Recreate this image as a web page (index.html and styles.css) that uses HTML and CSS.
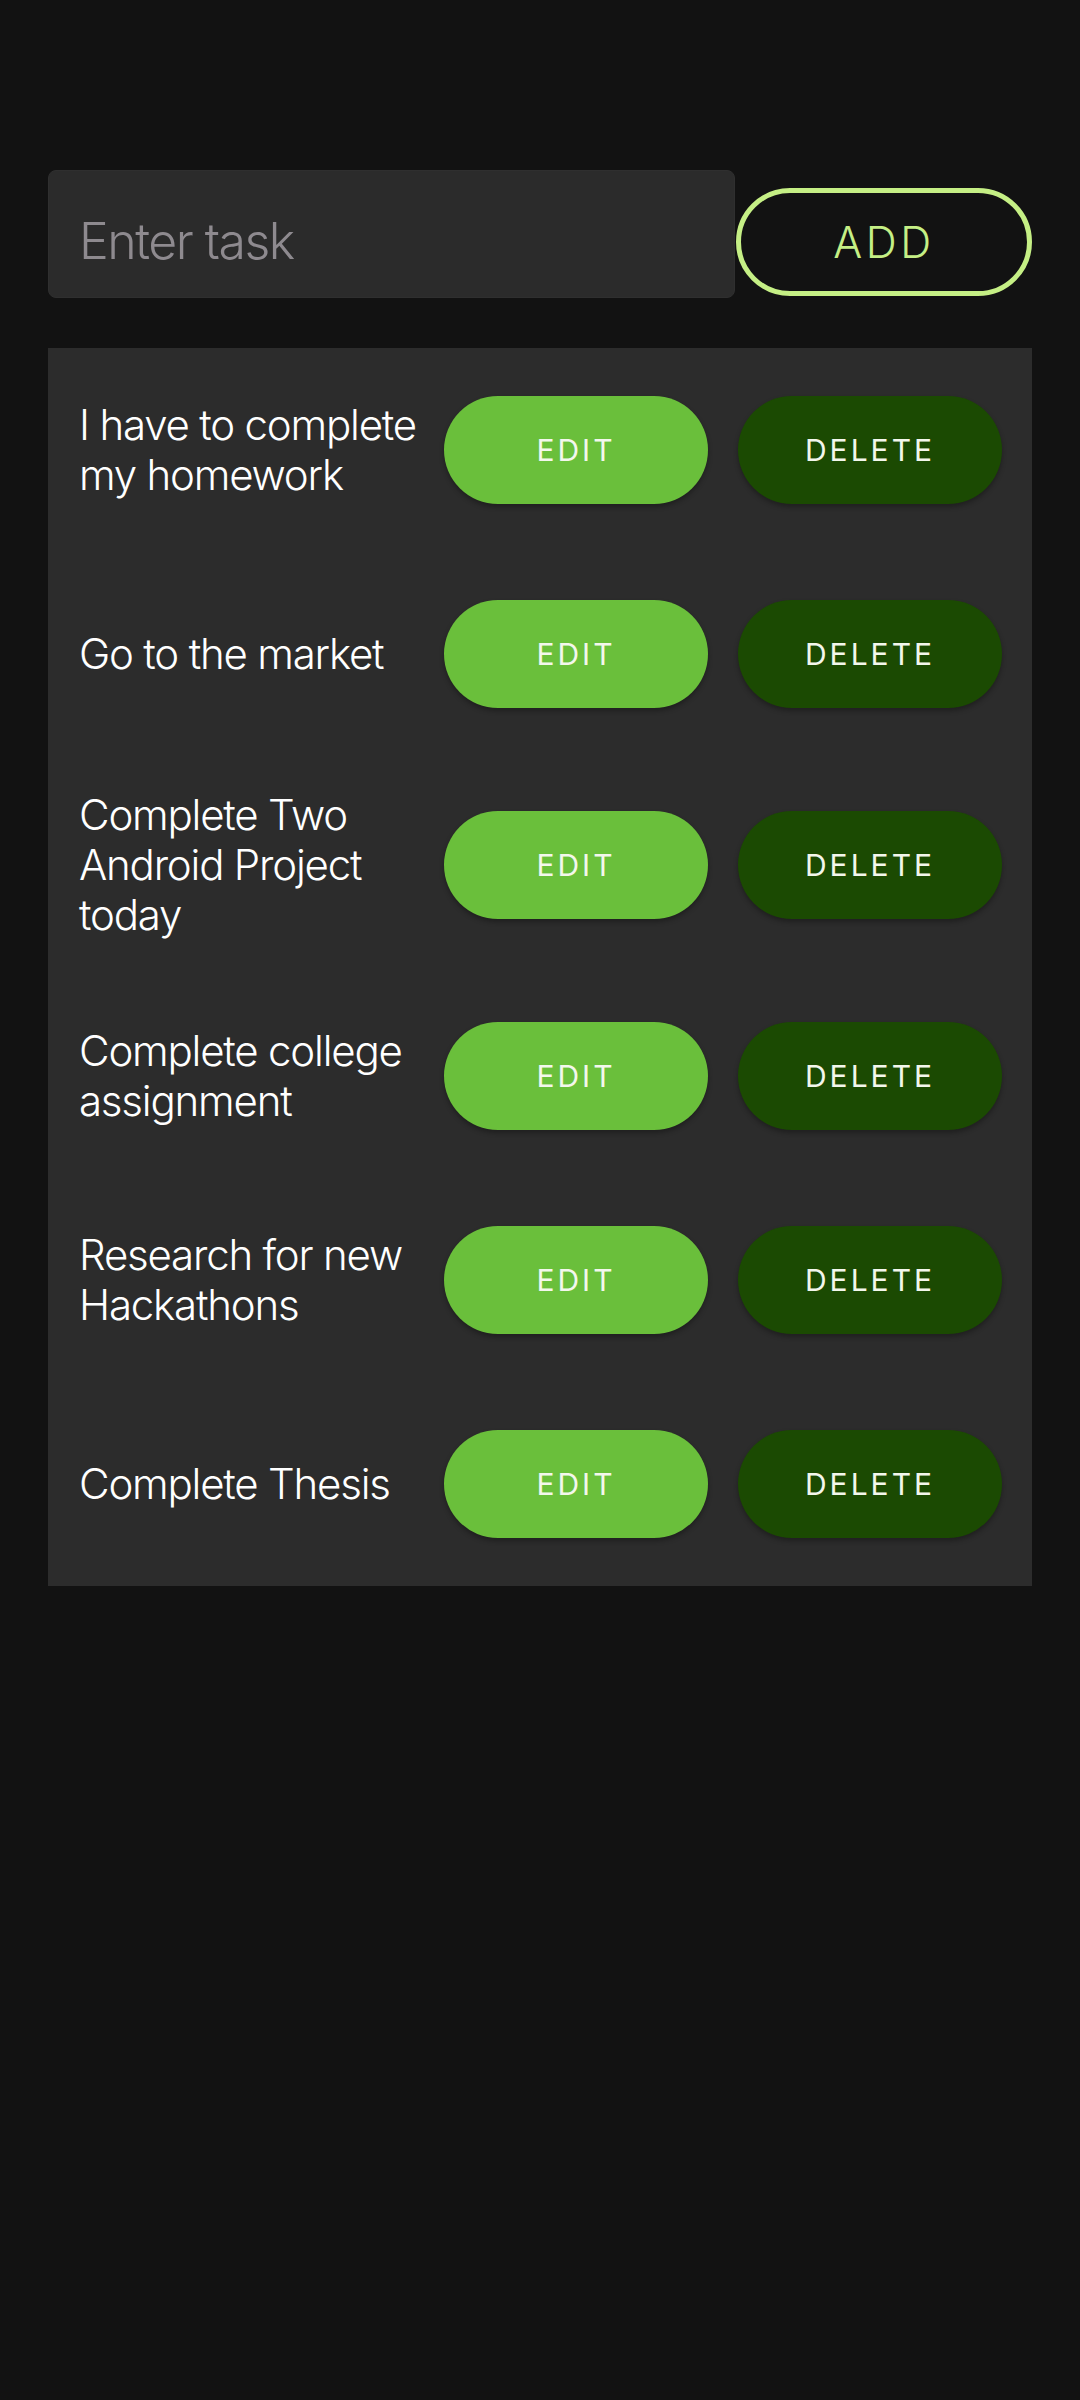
FILE: index.html
```html
<!DOCTYPE html>
<html lang="en">
<head>
<meta charset="utf-8">
<title>Tasks</title>
<link rel="stylesheet" href="styles.css">
</head>
<body>
<main class="screen">
  <div class="entry">
    <input class="entry-input" type="text" placeholder="Enter task">
    <button class="add-btn">ADD</button>
  </div>
  <section class="list">
    <div class="row">
      <p class="task">I have to complete my homework</p>
      <button class="btn btn-edit">EDIT</button>
      <button class="btn btn-delete">DELETE</button>
    </div>
    <div class="row">
      <p class="task">Go to the market</p>
      <button class="btn btn-edit">EDIT</button>
      <button class="btn btn-delete">DELETE</button>
    </div>
    <div class="row">
      <p class="task">Complete Two Android Project today</p>
      <button class="btn btn-edit">EDIT</button>
      <button class="btn btn-delete">DELETE</button>
    </div>
    <div class="row">
      <p class="task">Complete college assignment</p>
      <button class="btn btn-edit">EDIT</button>
      <button class="btn btn-delete">DELETE</button>
    </div>
    <div class="row">
      <p class="task">Research for new Hackathons</p>
      <button class="btn btn-edit">EDIT</button>
      <button class="btn btn-delete">DELETE</button>
    </div>
    <div class="row">
      <p class="task">Complete Thesis</p>
      <button class="btn btn-edit">EDIT</button>
      <button class="btn btn-delete">DELETE</button>
    </div>
  </section>
</main>
</body>
</html>
```

FILE: styles.css
```css
* { box-sizing: border-box; }

html, body {
  margin: 0;
  padding: 0;
  background: #121212;
}

body {
  width: 1080px;
  height: 2400px;
  font-family: Inter, "Noto Sans", sans-serif;
  color: #ffffff;
}

.screen {
  padding: 170px 48px 0 48px;
}

.entry {
  display: flex;
  align-items: flex-start;
  height: 128px;
}

.entry-input {
  width: 687px;
  height: 128px;
  background: #2b2b2b;
  border: 1px solid #2f2f2f;
  border-radius: 8px;
  padding: 14px 0 0 30px;
  font-family: Inter, "Noto Sans", sans-serif;
  font-size: 50px;
  font-weight: 300;
  letter-spacing: -1.5px;
  color: #ffffff;
  outline: none;
}

.entry-input::placeholder {
  color: #8e8a8f;
}

.add-btn {
  margin: 18px 0 0 1px;
  width: 296px;
  height: 108px;
  border: 5px solid #c5ef85;
  border-radius: 54px;
  background: #121212;
  color: #c5ef85;
  font-family: Inter, "Noto Sans", sans-serif;
  font-size: 43px;
  font-weight: 300;
  letter-spacing: 3.5px;
  padding: 0;
}

.list {
  margin-top: 50px;
  background: #2c2c2c;
}

.row {
  display: flex;
  align-items: center;
  padding: 34px 30px 34px 31px;
}

.task {
  flex: 1;
  margin: 0 14px 0 0;
  font-size: 42px;
  line-height: 50px;
  font-weight: 300;
  letter-spacing: -1.2px;
  color: #ffffff;
}

.btn {
  flex: none;
  width: 264px;
  height: 108px;
  margin: 14px 0;
  border: none;
  border-radius: 54px;
  font-family: Inter, "Noto Sans", sans-serif;
  font-size: 30px;
  font-weight: 400;
  letter-spacing: 3px;
  color: #f3f7ec;
  padding: 0;
  box-shadow: 0 3px 5px rgba(0, 0, 0, 0.3);
}

.btn-edit {
  background: #6abf3b;
}

.btn-delete {
  margin-left: 30px;
  background: #1b4a02;
}
```
